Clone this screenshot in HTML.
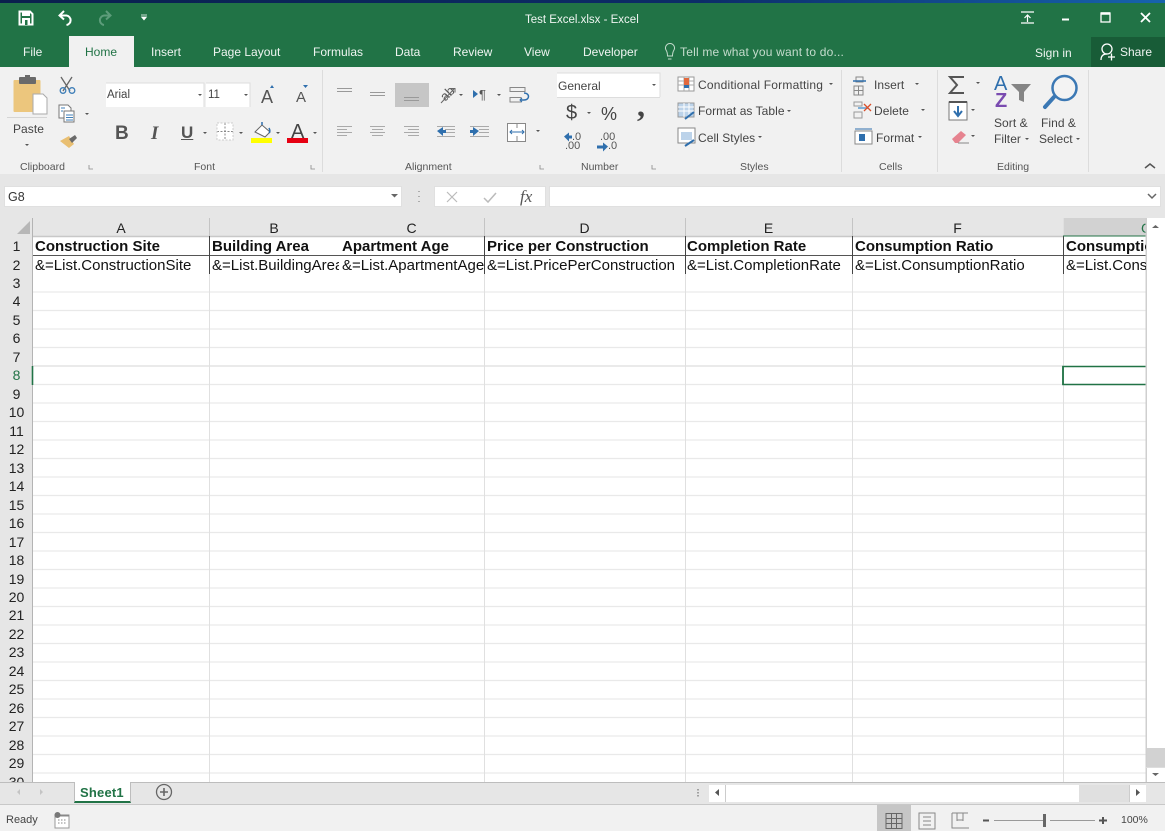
<!DOCTYPE html>
<html><head><meta charset="utf-8"><title>Test Excel.xlsx - Excel</title>
<style>
html,body{margin:0;padding:0;background:#fff}
#p{position:relative;width:1170px;height:836px;overflow:hidden;background:#fff;font-family:"Liberation Sans",sans-serif;filter:blur(.3px)}
#p div{position:absolute}
.t{position:absolute;white-space:nowrap;line-height:1}
.w{color:#fff;font-size:12px;opacity:.93}
.r{color:#444;font-size:12px;letter-spacing:.05px}
.g{color:#555;font-size:10.5px}
.c{color:#111;font-size:15px}
.b{font-weight:bold}
.n{color:#222;font-size:14px;width:33px;text-align:center;left:0}
.h{color:#222;font-size:14px;text-align:center;top:221px}
svg{position:absolute;left:0;top:0;overflow:visible}
#rib{position:absolute;left:0;top:0;width:1170px;height:180px}
</style></head><body><div id="p">

<div style="left:0;top:0;width:1165px;height:3px;background:linear-gradient(90deg,#0a1f4d,#0c2c68 60%,#1763ad)"></div>
<div style="left:0;top:3px;width:1165px;height:64px;background:#217346"></div>
<div style="left:1091px;top:37px;width:74px;height:30px;background:#185c37"></div>
<div style="left:69px;top:36px;width:65px;height:32px;background:#f1f1f1"></div>
<div style="left:0;top:67px;width:1165px;height:107px;background:#f1f1f1"></div>
<div style="left:0;top:174px;width:1165px;height:44px;background:#e6e6e6"></div>

<div id="rib">
<span class="t" style="left:525px;top:15px;color:#fff;font-size:11.5px;opacity:.93">Test Excel.xlsx - Excel</span>
<span class="t w" style="left:23px;top:46px">File</span>
<span class="t" style="left:85px;top:46px;color:#217346;font-size:12px">Home</span>
<span class="t w" style="left:151px;top:46px">Insert</span>
<span class="t w" style="left:213px;top:46px">Page Layout</span>
<span class="t w" style="left:313px;top:46px">Formulas</span>
<span class="t w" style="left:395px;top:46px">Data</span>
<span class="t w" style="left:453px;top:46px">Review</span>
<span class="t w" style="left:524px;top:46px">View</span>
<span class="t w" style="left:583px;top:46px">Developer</span>
<span class="t" style="left:680px;top:46px;color:#c5dccd;font-size:12px;letter-spacing:.2px">Tell me what you want to do...</span>
<span class="t w" style="left:1035px;top:47px">Sign in</span>
<span class="t w" style="left:1120px;top:46px">Share</span>

<div style="left:106px;top:83px;width:98px;height:24px;background:#fff"></div>
<div style="left:206px;top:83px;width:44px;height:24px;background:#fff"></div>
<div style="left:557px;top:73px;width:103px;height:24px;background:#fff;border-bottom:1px solid #ddd"></div>
<div style="left:395px;top:83px;width:34px;height:24px;background:#c6c6c6"></div>
<span class="t" style="left:107px;top:90px;font-size:11.5px;color:#444">Arial</span>
<span class="t" style="left:208px;top:90px;font-size:11.5px;color:#444">11</span>
<span class="t" style="left:558px;top:80px;font-size:12px;color:#444">General</span>
<span class="t r" style="left:13px;top:123px;font-size:12px">Paste</span>
<span class="t" style="left:115px;top:124px;font-size:19px;font-weight:bold;color:#555">B</span>
<span class="t" style="left:151px;top:124px;font-size:19px;font-style:italic;font-weight:bold;font-family:'Liberation Serif',serif;color:#555">I</span>
<span class="t" style="left:181px;top:124px;font-size:17px;font-weight:bold;color:#555;text-decoration:underline">U</span>
<span class="t" style="left:261px;top:88px;font-size:18px;color:#555">A</span>
<span class="t" style="left:296px;top:90px;font-size:15px;color:#555">A</span>
<span class="t" style="left:291px;top:122px;font-size:20px;color:#444">A</span>
<span class="t" style="left:566px;top:103px;font-size:20px;color:#444">$</span>
<span class="t" style="left:601px;top:105px;font-size:18px;color:#444">%</span>
<span class="t" style="left:637px;top:89px;font-size:32px;font-weight:bold;color:#444;font-family:'Liberation Serif',serif">,</span>
<span class="t" style="left:572px;top:132px;font-size:11px;color:#555">.0</span>
<span class="t" style="left:565px;top:141px;font-size:11px;color:#555">.00</span>
<span class="t" style="left:600px;top:132px;font-size:11px;color:#555">.00</span>
<span class="t" style="left:608px;top:141px;font-size:11px;color:#555">.0</span>
<span class="t" style="left:440px;top:87px;font-size:13px;color:#555;transform:rotate(-45deg)">ab</span>
<span class="t" style="left:479px;top:88px;font-size:13px;color:#555">¶</span>
<span class="t r" style="left:698px;top:79px;letter-spacing:.2px">Conditional Formatting</span>
<span class="t r" style="left:698px;top:105px">Format as Table</span>
<span class="t r" style="left:698px;top:132px">Cell Styles</span>
<span class="t r" style="left:874px;top:79px">Insert</span>
<span class="t r" style="left:874px;top:105px">Delete</span>
<span class="t r" style="left:876px;top:132px">Format</span>
<span class="t r" style="left:994px;top:117px">Sort &amp;</span>
<span class="t r" style="left:994px;top:133px">Filter</span>
<span class="t r" style="left:1041px;top:117px">Find &amp;</span>
<span class="t r" style="left:1039px;top:133px">Select</span>
<span class="t g" style="left:20px;top:162px">Clipboard</span>
<span class="t g" style="left:194px;top:162px">Font</span>
<span class="t g" style="left:405px;top:162px">Alignment</span>
<span class="t g" style="left:581px;top:162px">Number</span>
<span class="t g" style="left:740px;top:162px">Styles</span>
<span class="t g" style="left:879px;top:162px">Cells</span>
<span class="t g" style="left:997px;top:162px">Editing</span>

<svg width="1170" height="180" fill="none">
 <!-- QAT -->
 <path d="M19.500 11.500h10.500l2.500 2.500v10.500h-13z" stroke="#fff" stroke-width="2"/>
 <path d="M22 11h8v5h-8zM22 18h8v7h-8z" fill="#fff"/><rect x="25" y="20" width="2.500" height="5" fill="#217346"/><rect x="19" y="11" width="0" height="0"/>
 <path d="M64 11l-4.500 4.500 4.500 4M60 15.500h6.500a4.800 4.800 0 0 1 0 9.500" stroke="#fff" stroke-width="2"/>
 <path d="M106 11l4.500 4.500-4.500 4M110.500 15.500H104a4.800 4.800 0 0 0 0 9.500" stroke="#5d9d7b" stroke-width="2"/>
 <path d="M141 15h6M141.500 17h5l-2.500 3z" fill="#fff" stroke="#fff" stroke-width=".7"/>
 <!-- window controls -->
 <path d="M1021 12h13M1021 23h13M1027.500 22v-7M1024.500 18l3-3 3 3" stroke="#fff" stroke-width="1.200"/>
 <path d="M1062 19.500h7" stroke="#fff" stroke-width="2"/>
 <rect x="1101" y="13" width="9" height="9" stroke="#fff" stroke-width="1.300"/><path d="M1101 13.500h9" stroke="#fff" stroke-width="2.500"/>
 <path d="M1141 13l9 9M1150 13l-9 9" stroke="#fff" stroke-width="1.800"/>
 <!-- share, bulb -->
 <circle cx="1107" cy="49" r="5" stroke="#fff" stroke-width="1.300"/><path d="M1101 60c0-5 3-6 6-6M1108 57h7M1111.500 53.500v7" stroke="#fff" stroke-width="1.300"/>
 <path d="M668 59h3.500M666 50a4.500 4.500 0 1 1 8 0c-1 1.500-1.500 2.500-1.500 6h-5c0-3.500-.5-4.500-1.500-6z" stroke="#c5dccd" stroke-width="1"/>
 <!-- group separators -->
 <g stroke="#dcdcdc"><path d="M322.500 70v102M841.500 70v102M937.500 70v102M1088.500 70v102"/></g>
 <path d="M7 117.500h40" stroke="#d5d5d5"/>
 <!-- paste -->
 <rect x="13.500" y="80" width="27" height="32" rx="1" fill="#ecc67d"/>
 <rect x="19" y="77" width="17" height="7" rx="1" fill="#6a6a6a"/><rect x="25" y="75" width="5" height="4" fill="#6a6a6a"/>
 <path d="M33 94h10l4 4v16H33z" fill="#fff" stroke="#aaa"/>
 <path d="M61 77l9 14M72 77l-9 14" stroke="#666" stroke-width="1.300"/><circle cx="63" cy="90.500" r="2.800" stroke="#3f7fb8" stroke-width="1.300"/><circle cx="72" cy="90.500" r="2.800" stroke="#3f7fb8" stroke-width="1.300"/>
 <path d="M59 105h9l3 3v10H59z" fill="#fff" stroke="#777"/><path d="M64 111h10v11H64z" fill="#fff" stroke="#777"/><path d="M66 115h7M66 117.500h7M66 120h7M61 108h4M61 111h2" stroke="#3f7fb8"/>
 <path d="M60 141l9-5 5 8-5 4z" fill="#e9bf72"/><path d="M69 139l6-4 2 3-5 5z" fill="#6a6a6a"/>
 <g fill="#555"><path d="M85 113l2 2 2-2zM25 144l2 2 2-2zM198 94l2 2 2-2zM244 94l2 2 2-2zM203 132l2 2 2-2zM239 132l2 2 2-2zM276 132l2 2 2-2zM313 132l2 2 2-2zM459 94l2 2 2-2zM497 94l2 2 2-2zM536 130l2 2 2-2zM652 84l2 2 2-2zM587 112l2 2 2-2zM829 83l2 2 2-2zM787 110l2 2 2-2zM758 136l2 2 2-2zM915 83l2 2 2-2zM921 109l2 2 2-2zM918 136l2 2 2-2zM976 82l2 2 2-2zM971 109l2 2 2-2zM971 135l2 2 2-2zM1025 138l2 2 2-2zM1076 138l2 2 2-2z"/></g>
 <path d="M89 165v4h4M311 165v4h4M540 165v4h4M652 165v4h4" stroke="#888" stroke-width=".8"/>
 <path d="M1145 168l5-4 5 4" stroke="#555" stroke-width="1.500"/>
 <!-- font group -->
 <path d="M106 83h98v24M206 83h44v24" stroke="#ddd" fill="none"/>
 <path d="M270 88l2-3 2 3z" fill="#2f6fad"/><path d="M303 85h5l-2.500 3z" fill="#2f6fad"/>
 <rect x="217" y="123" width="16" height="17" fill="#fff"/><path d="M225 123v17M217 131.500h16" stroke="#888" stroke-dasharray="2 1.500"/><path d="M217 123h16v17h-16z" stroke="#ccc" stroke-dasharray="2 1.500"/>
 <path d="M255 132l7-7 8 7-5 5z" fill="#fff" stroke="#666"/><path d="M262 125v-3M269 128c1 2 1 4 0 5" stroke="#2f6fad" stroke-width="1.500"/>
 <rect x="251" y="138" width="21" height="5" fill="#ffff00"/><rect x="287" y="138" width="21" height="5" fill="#e60012"/>
 <!-- vertical align -->
 <g stroke="#aaa" stroke-width="1">
 <path d="M337 88.500h15M337 91.500h15M370 92.500h15M370 95.500h15M404 97.500h15M404 100.500h15" stroke="#999"/>
 <path d="M337 126.500h15M337 129.500h10M337 132.500h15M337 135.500h10M370 126.500h15M372 129.500h11M370 132.500h15M372 135.500h11M404 126.500h15M408 129.500h11M404 132.500h15M408 135.500h11"/>
 <path d="M437 126.500h18M445 129.500h10M445 132.500h10M437 136.500h18M470 126.500h19M479 129.500h10M479 132.500h10M470 136.500h19"/>
 </g>
 <path d="M437 131l6-4v3h3v3h-3v3zM479 131l-6-4v3h-3v3h3v3z" fill="#2f6fad" transform="translate(0 0)"/>
 <path d="M441 103l13-14M451 88.500h4v4" stroke="#666"/>
 <path d="M473 90l5 4-5 4z" fill="#2f6fad"/>
 <path d="M510 87.500h15v4h-15zM510 97.500h11v4.500h-11z" stroke="#888"/><path d="M521 100h3c6 0 6-7 0-7" stroke="#2f6fad" stroke-width="1.500"/><path d="M522 98l-2 2 2 2" stroke="#2f6fad"/>
 <rect x="507.500" y="123.500" width="18" height="18" fill="#fff" stroke="#888"/><path d="M517 123v5M517 136v5" stroke="#888"/><path d="M510 132h14M512 130l-2 2 2 2M522 130l2 2-2 2" stroke="#2f6fad"/>
 <!-- number -->
 <path d="M557 73h103v24" stroke="#ddd"/>
 <path d="M564 136.500l5-4v3h3v3h-3v3zM608 146.500l-5-4v3h-6v3h6v3z" fill="#2f6fad"/>
 <!-- styles -->
 <rect x="678" y="77" width="16" height="14" fill="#fff" stroke="#999"/><path d="M678 81h16M678 85h16M684 77v14M689 77v14" stroke="#aaa"/><rect x="684" y="78" width="5" height="3" fill="#e2683c"/><rect x="684" y="85" width="5" height="3" fill="#2f6fad"/><rect x="684" y="81" width="5" height="4" fill="#e2683c"/>
 <rect x="678" y="103" width="16" height="14" fill="#bcd3ea" stroke="#999"/><path d="M678 107h16M678 111h16M684 103v14M689 103v14" stroke="#fff"/>
 <path d="M685 119l9-7" stroke="#2f6fad" stroke-width="2"/>
 <rect x="678" y="128" width="17" height="15" fill="#fff" stroke="#888"/><rect x="681" y="132" width="11" height="8" fill="#bcd3ea"/><path d="M685 146l9-6" stroke="#2f6fad" stroke-width="2"/>
 <!-- cells -->
 <path d="M856 77h7v5h-7zM854 86h9v9h-9zM854 90.500h9M858.500 86v9" stroke="#888"/><path d="M853 81h13" stroke="#2f6fad" stroke-width="1.500"/>
 <path d="M854 102h8v4h-8zM854 112h8v6h-8z" stroke="#999"/><path d="M858 108h10" stroke="#7fb0d8" stroke-width="2"/><path d="M864 104l7 7M871 104l-7 7" stroke="#d94f2b" stroke-width="1.300"/>
 <rect x="855" y="131" width="17" height="13" fill="#fff" stroke="#888"/><rect x="859" y="134" width="6" height="7" fill="#2f6fad"/><path d="M855 129h17" stroke="#2f6fad"/>
 <!-- editing -->
 <path d="M964 77h-14l7 8-7 8h14" stroke="#555" stroke-width="2"/>
 <rect x="949" y="102" width="18" height="18" fill="#fff" stroke="#777"/><path d="M949 102h18" stroke="#555" stroke-width="2"/><path d="M958 106v9M954 111l4 5 4-5" stroke="#2f6fad" stroke-width="2"/>
 <path d="M952 139l9-8 5 4-8 8h-3z" fill="#e6838f"/><path d="M958 143h11" stroke="#888"/>
 <path d="M1011 84h20l-7 8v10l-5-2v-8z" fill="#858585"/>
 <path d="M1045 107l9-10" stroke="#3b78b4" stroke-width="4" stroke-linecap="round"/>
 <circle cx="1064.500" cy="88" r="12" stroke="#3b78b4" stroke-width="2.500" fill="#fff" fill-opacity=".2"/>
</svg>
<span class="t" style="left:994px;top:74px;font-size:20px;color:#2f6fad">A</span>
<span class="t" style="left:995px;top:91px;font-size:20px;color:#7a4bb0;font-weight:bold">Z</span>
</div>

<!-- formula bar -->
<div style="left:4px;top:186px;width:398px;height:21px;background:#fff;border:1px solid #e0e0e0;box-sizing:border-box"></div>
<span class="t" style="left:8px;top:191px;font-size:12.500px;color:#333">G8</span>
<div style="left:434px;top:186px;width:112px;height:21px;background:#fff;border:1px solid #e0e0e0;box-sizing:border-box"></div>
<div style="left:549px;top:186px;width:612px;height:21px;background:#fff;border:1px solid #e0e0e0;box-sizing:border-box"></div>
<span class="t" style="left:520px;top:188px;font-size:17px;font-style:italic;font-family:'Liberation Serif',serif;color:#555">fx</span>
<svg width="1170" height="836" fill="none">
 <path d="M391 194h7l-3.500 3.500z" fill="#666"/>
 <path d="M419 191v1M419 196v1M419 201v1" stroke="#999" stroke-width="1.500"/>
 <path d="M447 192l10 10M457 192l-10 10" stroke="#bbb" stroke-width="1.200"/>
 <path d="M484 198l4 4 8-9" stroke="#bbb" stroke-width="1.500"/>
 <path d="M1148 194l4 4 4-4" stroke="#666" stroke-width="1.500"/>
</svg>

<!-- headers -->
<div style="left:0;top:218px;width:1165px;height:18px;background:#e6e6e6"></div>
<div style="left:0;top:236px;width:33px;height:546px;background:#e6e6e6"></div>
<div style="left:1063px;top:218px;width:84px;height:18px;background:#d2d2d2"></div>
<span class="t h" style="left:33px;width:176px">A</span>
<span class="t h" style="left:209px;width:130px">B</span>
<span class="t h" style="left:339px;width:145px">C</span>
<span class="t h" style="left:484px;width:201px">D</span>
<span class="t h" style="left:685px;width:167px">E</span>
<span class="t h" style="left:852px;width:211px">F</span>
<div style="left:1063px;top:221px;width:83px;height:15px;overflow:hidden"><span class="t" style="left:78px;top:0;font-size:14px;color:#217346">G</span></div>

<!-- grid -->
<svg width="1170" height="836" fill="none">
 <path d="M30 221v13H17z" fill="#b7b7b7"/>
 <g stroke="#e9e9e9" stroke-width="1.300">
 <path d="M33 292h1113M33 310.500h1113M33 329h1113M33 347.500h1113M33 384.500h1113M33 403h1113M33 421.500h1113M33 440h1113M33 458.500h1113M33 477h1113M33 495.500h1113M33 514h1113M33 532.500h1113M33 551h1113M33 569.500h1113M33 588h1113M33 606.500h1113M33 625h1113M33 643.500h1113M33 662h1113M33 680.500h1113M33 699h1113M33 717.500h1113M33 736h1113M33 754.500h1113M33 773h1113"/>
 </g>
 <path d="M33 366h1030" stroke="#d4d4d4"/>
 <path d="M209.500 218v564M484.500 218v564M685.500 218v564M852.500 218v564M1063.500 218v564" stroke="#e0e0e0"/>
 <path d="M209.500 218v18M484.500 218v18M685.500 218v18M852.500 218v18" stroke="#c4c4c4"/>
 <path d="M33 236.500h1030" stroke="#c8c8c8" stroke-width="1.500"/>
 <path d="M32.500 218v564" stroke="#b4b4b4"/>
 <path d="M33 255.500h1113" stroke="#555"/>
 <path d="M209.500 236v38M484.500 236v38M685.500 236v38M852.500 236v38M1063.500 236v38" stroke="#444"/>
 <path d="M1146 366.500h-83v18h83" stroke="#217346" stroke-width="1.600"/>
 <path d="M1063 366v19" stroke="#217346" stroke-width="1.600"/>
 <path d="M1063 236h84" stroke="#217346"/>
 <path d="M32.500 366v19" stroke="#217346" stroke-width="1.600"/>
 <path d="M1146.500 218v564" stroke="#cfcfcf" stroke-width="2"/>
</svg>
<span class="t n" style="top:239px">1</span><span class="t n" style="top:258px">2</span><span class="t n" style="top:276px">3</span><span class="t n" style="top:294px">4</span><span class="t n" style="top:313px">5</span><span class="t n" style="top:331px">6</span><span class="t n" style="top:350px">7</span><span class="t n" style="top:368px;color:#217346">8</span><span class="t n" style="top:387px">9</span><span class="t n" style="top:405px">10</span><span class="t n" style="top:424px">11</span><span class="t n" style="top:442px">12</span><span class="t n" style="top:461px">13</span><span class="t n" style="top:479px">14</span><span class="t n" style="top:498px">15</span><span class="t n" style="top:516px">16</span><span class="t n" style="top:535px">17</span><span class="t n" style="top:553px">18</span><span class="t n" style="top:572px">19</span><span class="t n" style="top:590px">20</span><span class="t n" style="top:608px">21</span><span class="t n" style="top:627px">22</span><span class="t n" style="top:645px">23</span><span class="t n" style="top:664px">24</span><span class="t n" style="top:682px">25</span><span class="t n" style="top:701px">26</span><span class="t n" style="top:719px">27</span><span class="t n" style="top:738px">28</span><span class="t n" style="top:756px">29</span><div style="left:0;top:775px;width:33px;height:7px;overflow:hidden"><span class="t n" style="top:0">30</span></div>

<span class="t c b" style="left:35px;top:239px">Construction Site</span>
<span class="t c b" style="left:212px;top:239px">Building Area</span>
<span class="t c b" style="left:342px;top:239px">Apartment Age</span>
<span class="t c b" style="left:487px;top:239px">Price per Construction</span>
<span class="t c b" style="left:687px;top:239px">Completion Rate</span>
<span class="t c b" style="left:855px;top:239px">Consumption Ratio</span>
<div style="left:1064px;top:237px;width:82px;height:18px;overflow:hidden"><span class="t c b" style="left:2px;top:2px">Consumption</span></div>
<span class="t c" style="left:35px;top:258px">&amp;=List.ConstructionSite</span>
<div style="left:210px;top:256px;width:129px;height:18px;overflow:hidden"><span class="t c" style="left:2px;top:2px">&amp;=List.BuildingArea</span></div>
<span class="t c" style="left:342px;top:258px">&amp;=List.ApartmentAge</span>
<span class="t c" style="left:487px;top:258px">&amp;=List.PricePerConstruction</span>
<span class="t c" style="left:687px;top:258px">&amp;=List.CompletionRate</span>
<span class="t c" style="left:855px;top:258px">&amp;=List.ConsumptionRatio</span>
<div style="left:1064px;top:256px;width:82px;height:18px;overflow:hidden"><span class="t c" style="left:2px;top:2px">&amp;=List.ConsumptionRatio</span></div>

<!-- scrollbars -->
<div style="left:1147px;top:218px;width:18px;height:564px;background:#fff"></div>
<div style="left:1147px;top:748px;width:18px;height:19px;background:#d2d2d2"></div>
<div style="left:0;top:782px;width:1165px;height:23px;background:#e6e6e6;border-top:1px solid #bdbdbd;border-bottom:1px solid #c8c8c8;box-sizing:border-box"></div>
<div style="left:74px;top:782px;width:57px;height:21px;background:#fff;border-left:1px solid #bdbdbd;border-right:1px solid #bdbdbd;border-bottom:2px solid #217346;box-sizing:border-box"></div>
<span class="t" style="left:80px;top:786px;font-size:13px;font-weight:bold;color:#217346;letter-spacing:.2px">Sheet1</span>
<div style="left:709px;top:785px;width:437px;height:17px;background:#fff"></div>
<div style="left:1079px;top:785px;width:50px;height:17px;background:#e0e0e0"></div>
<div style="left:0;top:805px;width:1165px;height:26px;background:#f1f1f1"></div>
<div style="left:877px;top:805px;width:34px;height:26px;background:#c6c6c6"></div>
<span class="t" style="left:6px;top:815px;font-size:11px;color:#444">Ready</span>
<span class="t" style="left:1121px;top:815px;font-size:10.5px;color:#444">100%</span>
<svg width="1170" height="836" fill="none">
 <path d="M1152 228l3.500-3 3.500 3zM1152 773l3.500 3 3.500-3z" fill="#666"/>
 <path d="M1146 767.500h19" stroke="#ddd"/><path d="M725.500 785v17M1129.500 785v17" stroke="#ccc"/>
 <path d="M20 789l-3 3 3 3zM40 789l3 3-3 3z" fill="#c4c4c4"/>
 <circle cx="164" cy="792" r="7.500" stroke="#666" stroke-width="1.300"/><path d="M160 792h8M164 788v8" stroke="#666" stroke-width="1.600"/>
 <path d="M698 789v1.500M698 792v1.500M698 795v1.500" stroke="#888" stroke-width="1.500"/>
 <path d="M719 789l-4 3.500 4 3.500zM1136 789l4 3.500-4 3.500z" fill="#555"/>
 <rect x="55" y="815" width="14" height="13" fill="#fff" stroke="#999"/><path d="M55 815.500h14" stroke="#888" stroke-width="2"/><circle cx="57.500" cy="815" r="3" fill="#777"/><path d="M58 820h8M58 823h8" stroke="#888" stroke-dasharray="1.500 1.500"/>
 <path d="M886 813.500h16v15h-16zM886 818.500h16M886 823.500h16M891.500 813v16M896.500 813v16" stroke="#666"/>
 <path d="M919 813h16v16h-16zM923 817h8M923 821h8M923 825h8" stroke="#888"/>
 <path d="M952 813h16M952 813v15h17M957 813v8M963 813v8M957 820h6" stroke="#888"/>
 <path d="M983 820.500h6M1099 820.500h8M1103 817v7" stroke="#555" stroke-width="2"/>
 <path d="M994 820.500h41M1050 820.500h45" stroke="#999"/><rect x="1043" y="814" width="3" height="13" fill="#666"/><path d="M1035 820.500h8" stroke="#999"/>
</svg>
</div></body></html>
